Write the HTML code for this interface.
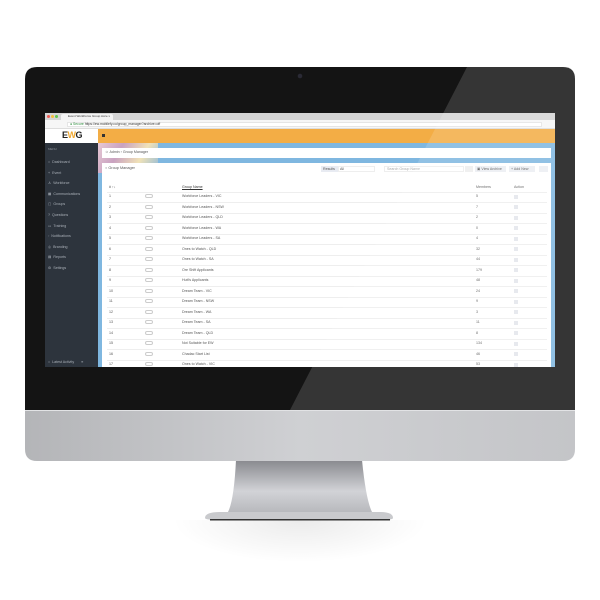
<!DOCTYPE html>
<html><head><meta charset="utf-8"><style>
*{margin:0;padding:0;box-sizing:border-box}
body{width:600px;height:600px;background:#fff;position:relative;overflow:hidden;font-family:"Liberation Sans",sans-serif}
.a{position:absolute}
.t{position:absolute;font-size:3.6px;color:#555;white-space:nowrap}
</style></head><body>
<div class="a" style="left:150px;top:520px;width:300px;height:50px;background:radial-gradient(ellipse at 50% 0%,rgba(0,0,0,0.08),rgba(0,0,0,0) 60%)"></div>
<svg class="a" style="left:0;top:0" width="600" height="600">
<defs><linearGradient id="g" x1="0" x2="0" y1="0" y2="1"><stop offset="0" stop-color="#88898e"/><stop offset="0.6" stop-color="#d2d3d7"/><stop offset="1" stop-color="#b8b9bd"/></linearGradient>
<linearGradient id="c" x1="0" x2="1" y1="0" y2="0"><stop offset="0" stop-color="#b4b5b8"/><stop offset="0.5" stop-color="#cfd0d3"/><stop offset="1" stop-color="#c4c5c8"/></linearGradient></defs>
<path d="M236 460 Q234 500 228 512 L372 512 Q366 500 362 460 Z" fill="url(#g)"/>
<path d="M205 518 Q205 512 220 512 L380 512 Q393 512 393 518 Q393 520 380 520 L220 520 Q205 520 205 518Z" fill="#c9cacd"/>
<rect x="210" y="519" width="180" height="1.5" fill="#333"/>
<path d="M25 410 L575 410 L575 449 Q575 461 563 461 L37 461 Q25 461 25 449 Z" fill="url(#c)"/>
<rect x="25" y="410" width="550" height="1" fill="#e2e3e5"/>
<path d="M37 67 L563 67 Q575 67 575 79 L575 410 L25 410 L25 79 Q25 67 37 67Z" fill="#141414"/>
<circle cx="300" cy="76" r="2.3" fill="#2a2a35"/>
</svg>
<div class="a" style="left:45px;top:113px;width:510px;height:254px;background:#7fb7e0;overflow:hidden">
 <div class="a" style="left:0;top:0;width:510px;height:7px;background:#d4d4d4"></div>
 <div class="a" style="left:2px;top:2px;width:3px;height:3px;border-radius:50%;background:#ee5b53"></div>
 <div class="a" style="left:6px;top:2px;width:3px;height:3px;border-radius:50%;background:#f4bd3a"></div>
 <div class="a" style="left:10px;top:2px;width:3px;height:3px;border-radius:50%;background:#5fc44d"></div>
 <div class="a" style="left:16px;top:1px;width:52px;height:6px;background:#f3f3f3;border-radius:2px 2px 0 0"></div>
 <div class="t" style="left:23px;top:1px;font-size:3px;color:#333">Event WorkForce Group Acce x</div>
 <div class="a" style="left:0;top:7px;width:510px;height:9px;background:#f6f6f6;border-bottom:1px solid #ddd"></div>
 <div class="a" style="left:22px;top:9px;width:475px;height:5px;background:#fff;border:1px solid #e5e5e5"></div>
 <div class="t" style="left:25px;top:8.5px;font-size:3.4px;color:#2a8a3a">● Secure <span style="color:#333">https://ew.mobilefy.co/group_manager?archive=off</span></div>
 <div class="a" style="left:0;top:16px;width:53px;height:14px;background:#fff"></div>
 <div class="t" style="left:17px;top:17px;font-size:9px;font-weight:bold;color:#222;letter-spacing:-.5px">E<span style="color:#f0a830">W</span>G</div>
 <div class="a" style="left:53px;top:16px;width:457px;height:14px;background:#f3ad45"></div>
 <div class="a" style="left:57px;top:21px;width:3px;height:3px;background:#333"></div>
 <div class="a" style="left:0;top:30px;width:53px;height:224px;background:#2d343d"></div>
 <div class="t" style="left:3px;top:34px;font-size:3px;color:#8b929a">MENU</div>
 <div class="t" style="left:3px;top:44px;color:#aab0b8;line-height:10.6px;font-size:3.6px">○ &nbsp;Dashboard<br>+ &nbsp;Event<br>♙ &nbsp;Workforce<br>▦ &nbsp;Communications<br>▢ &nbsp;Groups<br>? &nbsp;Questions<br>▭ &nbsp;Training<br>◦ &nbsp;Notifications<br>◎ &nbsp;Branding<br>▤ &nbsp;Reports<br>⚙ &nbsp;Settings</div>
 <div class="t" style="left:3px;top:247px;color:#aab0b8">○ &nbsp;Latest Activity &nbsp;&nbsp;&nbsp;&nbsp;&nbsp;&nbsp;≡</div>
 <div class="a" style="left:53px;top:30px;width:60px;height:30px;background:linear-gradient(120deg,#e7c9d5,#c9a2c0,#f0e2b8,#8fb8d8)"></div>
 <div class="a" style="left:57px;top:35px;width:449px;height:10px;background:#fff"></div>
 <div class="t" style="left:60px;top:37px">☺ Admin › Group Manager</div>
 <div class="a" style="left:57px;top:50px;width:449px;height:204px;background:#fff"></div>
 <div class="t" style="left:60px;top:53px;font-size:3.8px">○ Group Manager</div>
 <div class="a" style="left:276px;top:53px;width:17px;height:6px;background:#e8ebf2"></div><div class="t" style="left:278px;top:54px">Results</div>
 <div class="a" style="left:293px;top:53px;width:37px;height:6px;border:1px solid #eee"></div><div class="t" style="left:295px;top:54px">All</div>
 <div class="a" style="left:339px;top:53px;width:80px;height:6px;border:1px solid #eee"></div><div class="t" style="left:342px;top:54px;color:#aaa">Search Group Name</div>
 <div class="a" style="left:420px;top:53px;width:8px;height:6px;background:#eee"></div>
 <div class="a" style="left:430px;top:53px;width:31px;height:6px;background:#eceef3"></div><div class="t" style="left:432px;top:54px">▣ View Archive</div>
 <div class="a" style="left:464px;top:53px;width:26px;height:6px;background:#eceef3"></div><div class="t" style="left:466px;top:54px">+ Add New</div>
 <div class="a" style="left:494px;top:53px;width:9px;height:6px;background:#eceef3"></div>
 <div class="t" style="left:64px;top:72px">#  ↑↓</div>
 <div class="t" style="left:137px;top:72px;text-decoration:underline;color:#333">Group Name</div>
 <div class="t" style="left:431px;top:72px">Members</div>
 <div class="t" style="left:469px;top:72px">Action</div>
 <div id="rows"></div>
</div>
<svg class="a" style="left:0;top:0" width="600" height="600"><path d="M467 67 L563 67 Q575 67 575 79 L575 410 L290 410 Z" fill="#fff" opacity="0.14"/></svg>
<script>
var d=[["Workforce Leaders - VIC",5],["Workforce Leaders - NSW",7],["Workforce Leaders - QLD",2],["Workforce Leaders - WA",0],["Workforce Leaders - SA",4],["Ones to Watch - QLD",32],["Ones to Watch - SA",44],["Ore Shift Applicants",179],["Hutt's Applicants",48],["Dream Team - VIC",24],["Dream Team - NSW",9],["Dream Team - WA",3],["Dream Team - SA",11],["Dream Team - QLD",8],["Not Suitable for EW",134],["Chadac Start List",46],["Ones to Watch - VIC",53]];
var h="";d.forEach(function(r,i){var y=81+i*10.5;
h+='<div class="a" style="left:62px;top:'+(y-2.5)+'px;width:440px;height:1px;background:#eee"></div>';
h+='<div class="t" style="left:64px;top:'+y+'px">'+(i+1)+'</div>';
h+='<div class="a" style="left:100px;top:'+y+'px;width:8px;height:4px;border:1px solid #ccc;border-radius:3px"></div>';
h+='<div class="t" style="left:137px;top:'+y+'px">'+r[0]+'</div>';
h+='<div class="t" style="left:431px;top:'+y+'px">'+r[1]+'</div>';
h+='<div class="a" style="left:469px;top:'+(y+0.5)+'px;width:4px;height:4px;background:#e4e6ec"></div>';});
document.getElementById("rows").innerHTML=h;
</script>
</body></html>
